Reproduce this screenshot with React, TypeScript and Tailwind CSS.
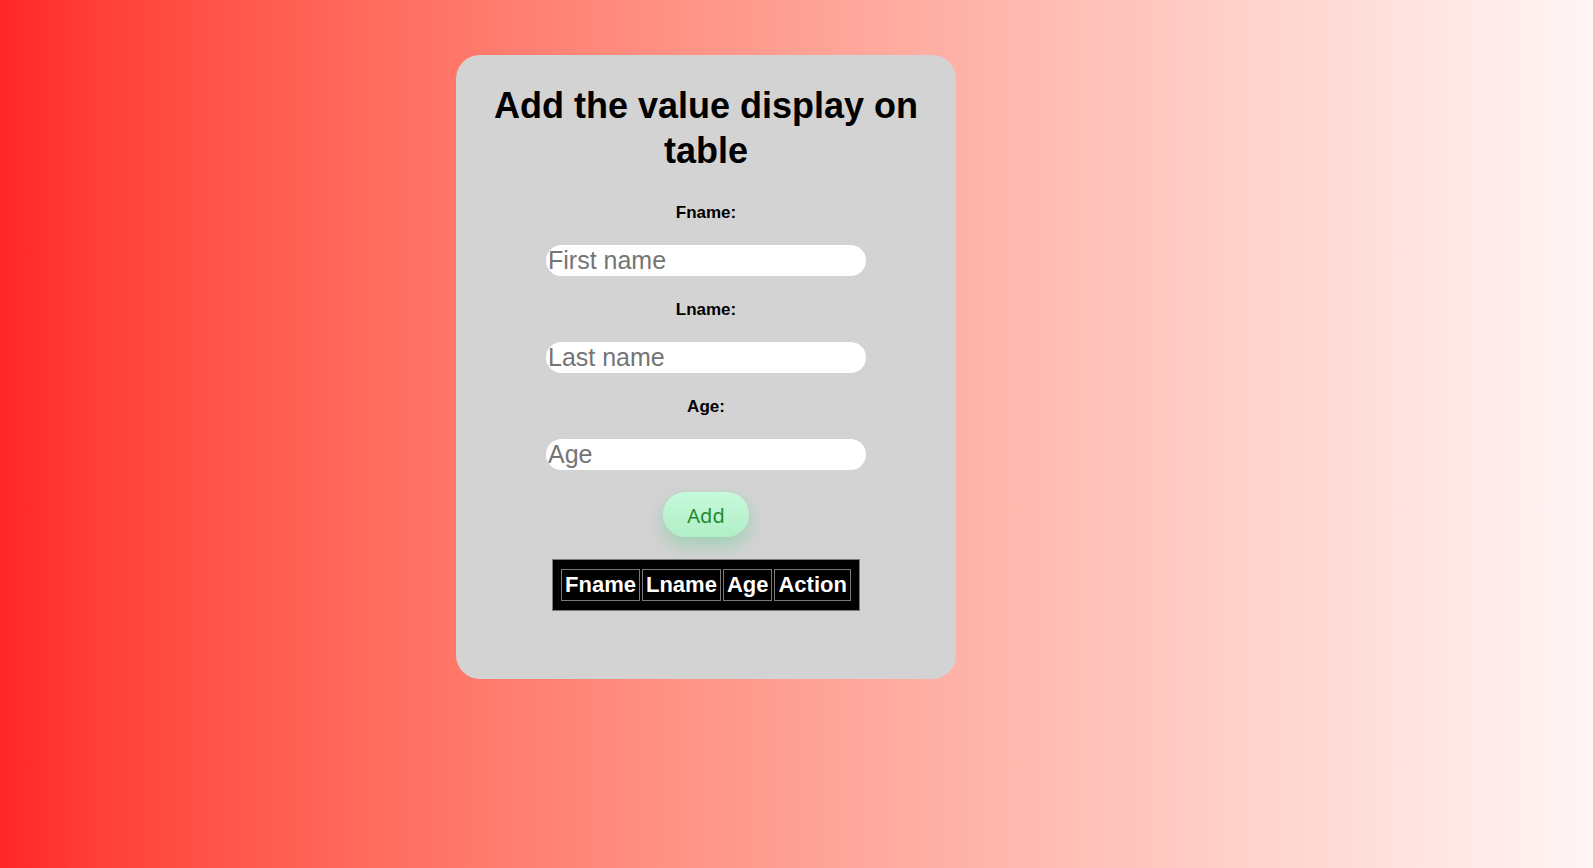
import React from "react";

export default function App() {
  const fields = [
    { label: "Fname:", ph: "First name" },
    { label: "Lname:", ph: "Last name" },
    { label: "Age:", ph: "Age" },
  ];
  return (
    <div className="w-[1593px] h-[868px] bg-gradient-to-r from-[#ff2626] to-[#fff6f6] overflow-hidden" style={{ fontFamily: '"Liberation Sans", Arial, sans-serif' }}>
      <div className="ml-[456px] mt-[55px] w-[500px] rounded-[24px] bg-[#d3d3d3] pt-[28px] pb-[68px] flex flex-col items-center">
        <h1 className="text-[36px] leading-[45px] font-bold text-black text-center w-[440px]">
          Add the value display on table
        </h1>
        <div className="mt-[30px] flex flex-col items-center">
          {fields.map((f, i) => (
            <div key={f.label} className={`flex flex-col items-center ${i > 0 ? "mt-[24px]" : ""}`}>
              <label className="text-[17px] leading-[20px] font-bold text-black">{f.label}</label>
              <input
                placeholder={f.ph}
                className="mt-[22px] w-[320px] h-[31px] rounded-full bg-white px-[2px] text-[25px] leading-[31px] outline-none placeholder:text-[#757575] text-black"
                style={{ fontFamily: '"Liberation Sans", Arial, sans-serif' }}
              />
            </div>
          ))}
        </div>
        <button
          className="mt-[22px] w-[86px] h-[45px] pt-[2px] rounded-full bg-gradient-to-b from-[#c6fadb] to-[#b0efc6] text-[#1f8a2c] text-[20px] shadow-[0_8px_18px_rgba(60,200,120,0.35)]"
          style={{ fontFamily: '"Noto Sans", "Open Sans", sans-serif' }}
        >
          Add
        </button>
        <div className="mt-[22px] border border-[#7a7a7a] bg-black px-[6px] py-[7px]">
          <table className="border-separate border-spacing-[2px]">
            <thead>
              <tr>
                {["Fname", "Lname", "Age", "Action"].map((h) => (
                  <th
                    key={h}
                    className="border border-[#7a7a7a] px-[3px] py-[1px] text-[22px] leading-[28px] font-bold text-white"
                  >
                    {h}
                  </th>
                ))}
              </tr>
            </thead>
            <tbody></tbody>
          </table>
        </div>
      </div>
    </div>
  );
}
